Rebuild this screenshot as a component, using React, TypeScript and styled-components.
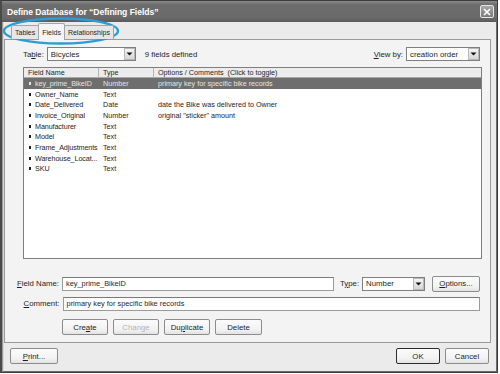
import React from "react";
import styled, { createGlobalStyle, css } from "styled-components";

const Global = createGlobalStyle`
  html, body { margin: 0; padding: 0; background: #ffffff; }
  body { font-family: "Liberation Sans", Arial, sans-serif; }
  * { box-sizing: border-box; }
`;

const Window = styled.div`
  position: relative;
  width: 498px;
  height: 373px;
  background: #ebebeb;
  border: 1px solid #3c3c3c;
  border-left: 2px solid #4a4a4a;
  box-shadow: inset 1px 1px 0 #9a9a9a, inset -1px -1px 0 #6a6a6a, inset 2px 2px 0 #d8d8d8;
  display: flex;
  flex-direction: column;
  font-size: 7.8px;
  color: #1e1e1e;
`;

const TitleBar = styled.div`
  height: 21px;
  flex: none;
  display: flex;
  align-items: center;
  justify-content: space-between;
  padding: 0 3px 0 5px;
  background: linear-gradient(180deg, #8a8a8a 0%, #6c6c6c 18%, #6a6a6a 80%, #5a5a5a 100%);
  color: #ffffff;
  font-weight: bold;
  font-size: 8.6px;
  letter-spacing: -0.05px;
`;

const CloseButton = styled.div`
  width: 14px;
  height: 13px;
  border: 1px solid #e6e6e6;
  border-radius: 2px;
  background: linear-gradient(180deg, #a8a8a8, #7a7a7a);
  display: flex;
  align-items: center;
  justify-content: center;
`;

const TabStrip = styled.div`
  height: 17px;
  flex: none;
  display: flex;
  align-items: flex-end;
  padding-left: 9px;
  font-size: 7px;
`;

const Tab = styled.div<{ $active?: boolean }>`
  height: 14px;
  padding: 0 3px;
  display: flex;
  align-items: center;
  border: 1px solid #a4a4a4;
  border-bottom: none;
  border-radius: 2px 2px 0 0;
  background: #e6e6e6;
  margin-right: -1px;
  position: relative;
  z-index: 1;
  ${(p) =>
    p.$active &&
    css`
      background: #f5f5f5;
      z-index: 2;
      margin-bottom: -1px;
      height: 17px;
      padding: 0 3px;
    `}
`;

const Panel = styled.div`
  margin: 0 6px 0 2px;
  height: 304px;
  flex: none;
  background: #f3f3f3;
  border: 1px solid #9a9a9a;
  display: flex;
  flex-direction: column;
  padding: 7px 10px 0 18px;
`;

const TopRow = styled.div`
  display: flex;
  align-items: center;
  height: 14px;
`;

const Label = styled.span<{ $w?: number }>`
  display: inline-block;
  ${(p) => p.$w && css`width: ${p.$w}px; text-align: right;`}
  margin-right: 3px;
  white-space: nowrap;
`;

const SelectBox = styled.div<{ $w: number }>`
  width: ${(p) => p.$w}px;
  height: 14px;
  background: #ffffff;
  border: 1px solid #7e7e7e;
  display: flex;
  align-items: center;
  padding-left: 3px;
  justify-content: space-between;
  white-space: nowrap;
`;

const DropButton = styled.div`
  width: 11px;
  height: 12px;
  background: linear-gradient(180deg, #f4f4f4, #d6d6d6);
  border: 1px solid #b8b8b8;
  display: flex;
  align-items: center;
  justify-content: center;
`;

const Spacer = styled.div`
  flex: 1;
`;

const FieldCount = styled.span`
  margin-left: 9px;
`;

const ListBox = styled.div`
  margin-top: 6px;
  height: 192px;
  flex: none;
  width: 459px;
  background: #ffffff;
  border: 1px solid #7e7e7e;
  display: flex;
  flex-direction: column;
  font-size: 7.2px;
`;

const Grid = styled.div`
  display: grid;
  grid-template-columns: 75px 55px 1fr;
`;

const HeaderCell = styled.div`
  height: 10px;
  background: #ececec;
  border-bottom: 1px solid #a8a8a8;
  border-right: 1px solid #b4b4b4;
  padding-left: 4px;
  display: flex;
  align-items: center;
  white-space: nowrap;
  overflow: hidden;
  &:last-child { border-right: none; }
`;

const Row = styled.div<{ $sel?: boolean }>`
  display: grid;
  grid-template-columns: 75px 55px 1fr;
  height: 10.7px;
  align-items: center;
  background: ${(p) => (p.$sel ? "#6e6e6e" : "transparent")};
  color: ${(p) => (p.$sel ? "#e4e4e4" : "#1e1e1e")};
  white-space: nowrap;
`;

const NameCell = styled.div`
  display: flex;
  align-items: center;
  padding-left: 5px;
  letter-spacing: -0.1px;
`;

const Bullet = styled.span`
  width: 2px;
  height: 3px;
  background: currentColor;
  margin-right: 4px;
  flex: none;
`;

const Cell = styled.div`
  padding-left: 4px;
`;

const FormRow = styled.div<{ $mt: number }>`
  display: flex;
  align-items: center;
  margin-top: ${(p) => p.$mt}px;
  margin-left: -18px;
  height: 15px;
`;

const TextInput = styled.div<{ $w: number }>`
  width: ${(p) => p.$w}px;
  height: 14px;
  background: #ffffff;
  border: 1px solid #9a9a9a;
  border-top-color: #7a7a7a;
  display: flex;
  align-items: center;
  padding-left: 3px;
  white-space: nowrap;
  font-size: 7.4px;
`;

const Button = styled.div<{ $w: number; $disabled?: boolean; $default?: boolean }>`
  width: ${(p) => p.$w}px;
  height: 16px;
  display: flex;
  align-items: center;
  justify-content: center;
  background: linear-gradient(180deg, #fbfbfb 0%, #f2f2f2 70%, #e2e2e2 100%);
  border: 1px solid ${(p) => (p.$default ? "#2c2c2c" : "#8c8c8c")};
  border-radius: 2px;
  color: ${(p) => (p.$disabled ? "#b4b4b4" : "#1e1e1e")};
  flex: none;
  white-space: nowrap;
`;

const ButtonRow = styled.div`
  display: flex;
  gap: 5px;
  margin-top: 8px;
  margin-left: 39px;
`;

const Footer = styled.div`
  flex: 1;
  display: flex;
  align-items: flex-start;
  padding: 5px 8px 0 8px;
  gap: 5px;
`;

const Annotation = styled.svg`
  position: absolute;
  left: -2px;
  top: -1px;
  pointer-events: none;
`;

const Arrow = () => (
  <svg width="7" height="4" viewBox="0 0 7 4">
    <path d="M0.5 0.5 H6.5 L3.5 3.5 Z" fill="#111" />
  </svg>
);

const rows: [string, string, string][] = [
  ["key_prime_BikeID", "Number", "primary key for specific bike records"],
  ["Owner_Name", "Text", ""],
  ["Date_Delivered", "Date", "date the Bike was delivered to Owner"],
  ["Invoice_Original", "Number", 'original "sticker" amount'],
  ["Manufacturer", "Text", ""],
  ["Model", "Text", ""],
  ["Frame_Adjustments", "Text", ""],
  ["Warehouse_Locat...", "Text", ""],
  ["SKU", "Text", ""],
];

export default function App() {
  return (
    <>
      <Global />
      <Window>
        <TitleBar>
          <span>Define Database for &ldquo;Defining Fields&rdquo;</span>
          <CloseButton>
            <svg width="8" height="8" viewBox="0 0 8 8">
              <path d="M1 1 L7 7 M7 1 L1 7" stroke="#ffffff" strokeWidth="1.6" />
            </svg>
          </CloseButton>
        </TitleBar>
        <TabStrip>
          <Tab>Tables</Tab>
          <Tab $active>Fields</Tab>
          <Tab>Relationships</Tab>
        </TabStrip>
        <Panel>
          <TopRow>
            <Label>
              Ta<u>b</u>le:
            </Label>
            <SelectBox $w={89}>
              <span>Bicycles</span>
              <DropButton>
                <Arrow />
              </DropButton>
            </SelectBox>
            <FieldCount>9 fields defined</FieldCount>
            <Spacer />
            <Label>
              <u>V</u>iew by:
            </Label>
            <SelectBox $w={74}>
              <span>creation order</span>
              <DropButton>
                <Arrow />
              </DropButton>
            </SelectBox>
          </TopRow>
          <ListBox>
            <Grid>
              <HeaderCell>Field Name</HeaderCell>
              <HeaderCell>Type</HeaderCell>
              <HeaderCell>Options / Comments&nbsp;&nbsp;(Click to toggle)</HeaderCell>
            </Grid>
            {rows.map(([n, t, c], i) => (
              <Row key={n} $sel={i === 0}>
                <NameCell>
                  <Bullet />
                  {n}
                </NameCell>
                <Cell>{t}</Cell>
                <Cell>{c}</Cell>
              </Row>
            ))}
          </ListBox>
          <FormRow $mt={17}>
            <Label $w={55}>
              <u>F</u>ield Name:
            </Label>
            <TextInput $w={277}>key_prime_BikeID</TextInput>
            <Label style={{ marginLeft: 6 }}>
              T<u>y</u>pe:
            </Label>
            <SelectBox $w={64}>
              <span>Number</span>
              <DropButton>
                <Arrow />
              </DropButton>
            </SelectBox>
            <Button $w={48} style={{ marginLeft: 7 }}>
              <span>
                <u>O</u>ptions...
              </span>
            </Button>
          </FormRow>
          <FormRow $mt={5}>
            <Label $w={55}>
              <u>C</u>omment:
            </Label>
            <TextInput $w={421}>primary key for specific bike records</TextInput>
          </FormRow>
          <ButtonRow>
            <Button $w={46}>
              <span>
                Cre<u>a</u>te
              </span>
            </Button>
            <Button $w={46} $disabled>
              Change
            </Button>
            <Button $w={46}>
              <span>
                Du<u>p</u>licate
              </span>
            </Button>
            <Button $w={47}>Delete</Button>
          </ButtonRow>
        </Panel>
        <Footer>
          <Button $w={48}>
            <span>
              <u>P</u>rint...
            </span>
          </Button>
          <Spacer />
          <Button $w={44} $default>
            OK
          </Button>
          <Button $w={44}>Cancel</Button>
        </Footer>
        <Annotation width="130" height="50">
          <ellipse cx="61" cy="31" rx="57" ry="12.5" fill="none" stroke="#2b9dd6" strokeWidth="2.4" />
        </Annotation>
      </Window>
    </>
  );
}
